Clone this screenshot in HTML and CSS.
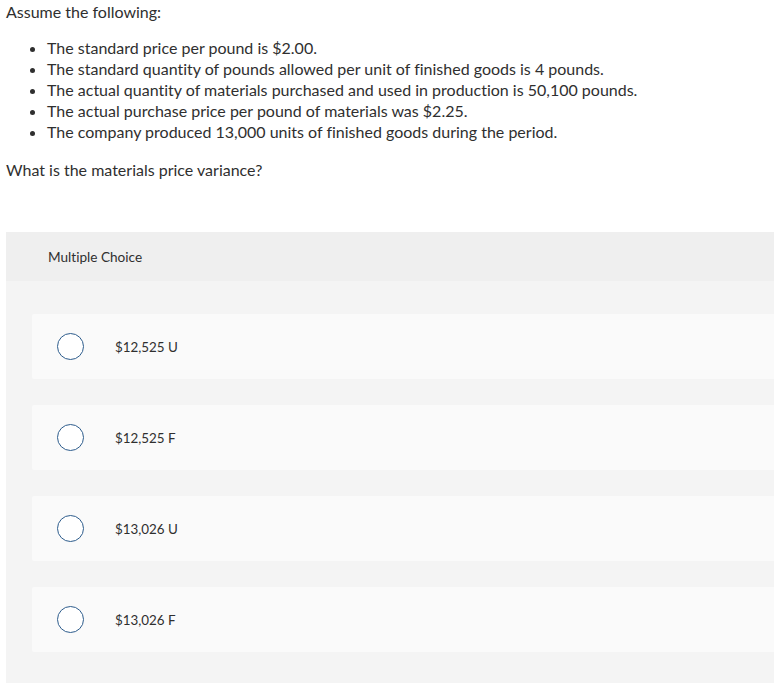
FILE: index.html
```html
<!DOCTYPE html>
<html>
<head>
<meta charset="utf-8">
<link rel="stylesheet" href="styles.css">
</head>
<body>
<div class="question">
  <p class="intro">Assume the following:</p>
  <ul class="facts">
    <li>The standard price per pound is $2.00.</li>
    <li>The standard quantity of pounds allowed per unit of finished goods is 4 pounds.</li>
    <li>The actual quantity of materials purchased and used in production is 50,100 pounds.</li>
    <li>The actual purchase price per pound of materials was $2.25.</li>
    <li>The company produced 13,000 units of finished goods during the period.</li>
  </ul>
  <p class="ask">What is the materials price variance?</p>
</div>
<div class="panel">
  <div class="panel-head">Multiple Choice</div>
  <div class="panel-body">
    <div class="option"><span class="radio"></span><span class="label">$12,525 U</span></div>
    <div class="option"><span class="radio"></span><span class="label">$12,525 F</span></div>
    <div class="option"><span class="radio"></span><span class="label">$13,026 U</span></div>
    <div class="option"><span class="radio"></span><span class="label">$13,026 F</span></div>
  </div>
</div>
</body>
</html>
```
FILE: styles.css
```css
html, body {
  margin: 0;
  padding: 0;
  background: #ffffff;
}
body {
  font-family: Lato, "Liberation Sans", sans-serif;
  font-variant-ligatures: none;
  color: #2f2f2f;
  overflow: hidden;
}
.question {
  padding: 1px 6px 0 6px;
  font-size: 16px;
  line-height: 21px;
}
.intro {
  margin: 0;
}
.facts {
  margin: 15px 0 0 0;
  padding-left: 41px;
}
.facts li {
  line-height: 21px;
}
.ask {
  margin: 17px 0 0 0;
}
.panel {
  margin: 52px 0 0 6px;
  background: #f4f4f4;
  padding-bottom: 40px;
}
.panel-head {
  height: 49px;
  background: #efefef;
  display: flex;
  align-items: center;
  padding-left: 42px;
  font-size: 13.6px;
}
.panel-body {
  padding: 33px 0 0 26px;
  display: flex;
  flex-direction: column;
  gap: 26px;
}
.option {
  height: 65px;
  background: #fafafa;
  border-radius: 2px 0 0 2px;
  display: flex;
  align-items: center;
  padding-left: 25px;
  font-size: 13.4px;
}
.radio {
  width: 25px;
  height: 25px;
  border: 1.5px solid #2d5c8c;
  border-radius: 50%;
  background: #ffffff;
  flex: none;
}
.label {
  margin-left: 31px;
}
```
